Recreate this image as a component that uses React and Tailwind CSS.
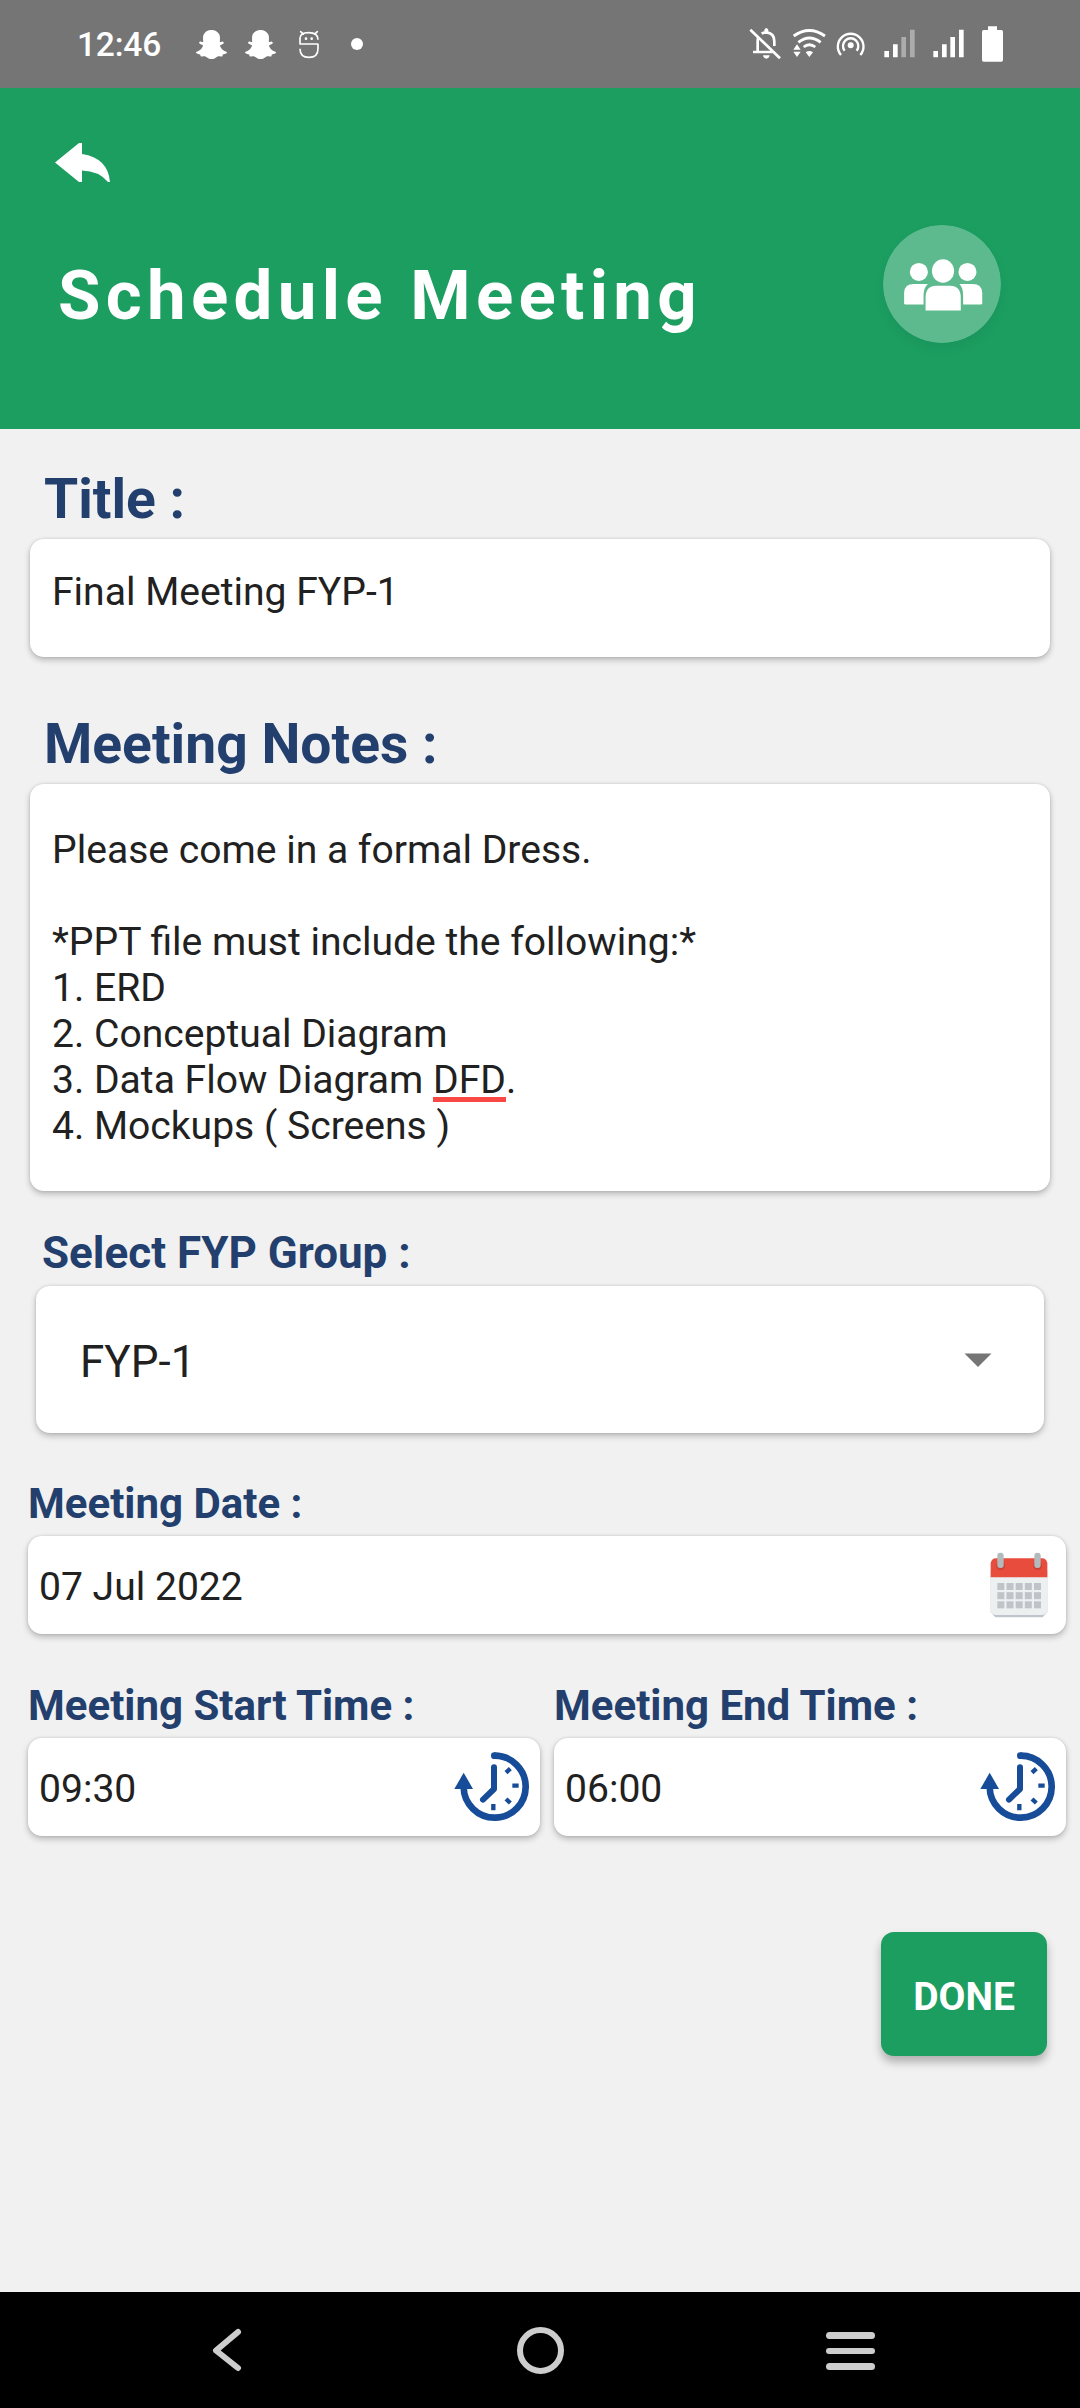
import React from "react";
import { FaSnapchatGhost } from "react-icons/fa";

const CARD =
  "bg-white rounded-[14px] shadow-[0_3px_6px_rgba(0,0,0,0.24),0_0_3px_rgba(0,0,0,0.12)]";
const LABEL = "font-bold text-[#233f6e] whitespace-pre";

function StatusBar() {
  return (
    <div className="flex h-[88px] items-start bg-[#757575] text-white">
      <div className="ml-[77px] mt-[25px] w-[119px] text-[33.500px] font-medium leading-[40px] tracking-[-0.2px]">12:46</div>
      <FaSnapchatGhost className="mt-[29px] size-[31px]" />
      <FaSnapchatGhost className="ml-[18px] mt-[29px] size-[31px]" />
      <svg className="ml-[22px] mt-[30px] h-[29px] w-[22px]" viewBox="714 90 66 87" fill="none" stroke="currentColor" strokeWidth="5">
        <path d="M775 132H720V115Q720 98 746 98Q774 98 774 119M720 146Q720 172 747 172Q774 172 774 146V132" strokeLinejoin="round" />
        <path d="M722 95L730 102M772 95L764 102" strokeLinecap="round" />
        <circle cx="738" cy="116" r="4" fill="currentColor" stroke="none" />
        <circle cx="755" cy="116" r="4" fill="currentColor" stroke="none" />
      </svg>
      <div className="ml-[31px] mt-[38px] size-[12px] rounded-full bg-white" />
      <svg className="ml-auto mr-[76px] mt-[24px] h-[40px] w-[256px]" viewBox="54 72 768 120" fill="none" stroke="currentColor">
        <path d="M61 89L150 175" strokeWidth="8" />
        <path d="M69 156H128M83 156V122Q83 113 86 110M95 101Q101 97 109 97Q133 99 133 124V138" strokeWidth="8" />
        <path d="M103 97V89Q109 79 115 89V97ZM99 166H119Q117 176 109 176Q101 176 99 166Z" fill="currentColor" stroke="none" />
        <path d="M191 108Q238 75 285 108M205 127Q238 101 272 127M221 141Q238 127 256 141" strokeWidth="8.5" />
        <path d="M227 157Q238 149 249 157L238 171ZM201 133L212 149H190ZM190 155H212L201 171Z" fill="currentColor" stroke="none" />
        <path d="M333 165A38.500 38.500 0 1 1 391 165M344 152A23 23 0 1 1 380 152" strokeWidth="7" />
        <circle cx="362" cy="136" r="9" fill="currentColor" stroke="none" />
        <g fill="currentColor" stroke="none">
          <path d="M463 153H477V172H463ZM489 133H503V172H489Z" />
          <path d="M514 111H528V172H514ZM540 89H554V172H540Z" opacity="0.4" />
          <path d="M610 153H624V172H610ZM636 133H650V172H636ZM661 111H675V172H661ZM687 89H701V172H687Z" />
          <path d="M774 79H801V90H814Q819 90 819 95V180Q819 185 814 185H761Q756 185 756 180V95Q756 90 761 90H774Z" />
        </g>
      </svg>
    </div>
  );
}

function Header() {
  return (
    <header className="flex h-[341px] flex-col bg-[#1c9e61] text-white">
      <svg className="ml-[55px] mt-[55px] h-[39px] w-[56px]" viewBox="0 0 56 39" fill="currentColor">
        <path d="M0 19.500L24 0H27V11Q53 15 55 39H53Q44 28 27 27.500V39H24Z" />
      </svg>
      <div className="flex items-start">
        <h1 className="ml-[58px] mt-[74px] text-[69px] font-bold leading-[80px] tracking-[5.3px]">Schedule Meeting</h1>
        <svg className="ml-auto mr-[79px] mt-[43px] size-[118px] rounded-full shadow-[0_6px_12px_rgba(0,0,0,0.06)]" viewBox="72 45 352 352" fill="currentColor">
          <circle cx="248" cy="221" r="176" fill="#5dba8e" />
          <ellipse cx="251" cy="182" rx="33" ry="35" />
          <circle cx="179" cy="185" r="27" />
          <circle cx="324" cy="185" r="27" />
          <path d="M135 280V246Q137 221 163 221H206Q193 232 193 256V282H140Q135 282 135 280ZM368 280V246Q366 221 340 221H300Q311 232 311 256V282H363Q368 282 368 280Z" />
          <path d="M199 300V262Q199 226 231 226H272Q304 226 304 262V300Z" />
        </svg>
      </div>
    </header>
  );
}

function CalendarIcon() {
  const cols = [112, 139.5, 167, 194.5, 222];
  const rows = [127, 154.5, 182];
  return (
    <svg className="h-[66px] w-[58px]" viewBox="90 34 174 198">
      <path d="M92 90H262V214L248 230H106L92 214Z" fill="#bfc6cb" />
      <path d="M92 90H262V212Q257 223 246 223H108Q97 223 92 212Z" fill="#ecf0f1" />
      <path d="M92 110V68Q95 53 108 53H246Q259 53 262 68V110Z" fill="#e74c3c" />
      <circle cx="122" cy="75" r="13" fill="#b83c30" opacity="0.6" />
      <circle cx="233" cy="75" r="13" fill="#b83c30" opacity="0.6" />
      <rect x="112" y="36" width="19" height="46" rx="9" fill="#b3babd" />
      <rect x="223" y="36" width="19" height="46" rx="9" fill="#b3babd" />
      {rows.map((y) => cols.map((x) => <rect key={x + "-" + y} x={x} y={y} width="21" height="21" fill="#bec4c8" />))}
    </svg>
  );
}

function ClockIcon() {
  return (
    <svg className="h-[70px] w-[75px]" viewBox="44 37 225 210" fill="none" stroke="#174c98">
      <path d="M165 48A93 93 0 1 1 73 142" strokeWidth="20" />
      <circle cx="165" cy="48" r="10" fill="#174c98" stroke="none" />
      <path d="M73 99L101 148H45Z" fill="#174c98" stroke="none" />
      <path d="M164 83V148L131 180" strokeWidth="18" strokeLinecap="round" strokeLinejoin="round" />
      <path d="M200 99L213 87M219 138H238M200 178L213 190M162 193V212" strokeWidth="13" />
    </svg>
  );
}

function TimeField({ label, value }) {
  return (
    <div className="w-[512px]">
      <div className={LABEL + " text-[42px] leading-[48px]"}>{label}</div>
      <div className={CARD + " mt-[8px] flex h-[98px] items-center justify-between pl-[11px] pr-[11px]"}>
        <span className="mt-[3px] text-[39.100px] leading-[46px]">{value}</span>
        <ClockIcon />
      </div>
    </div>
  );
}

function NavBar() {
  return (
    <nav className="mt-auto flex h-[116px] items-center bg-black text-[#cdcdcd]">
      <svg className="ml-[211px] h-[48px] w-[32px]" viewBox="0 0 32 48" fill="none" stroke="currentColor" strokeWidth="6" strokeLinecap="round" strokeLinejoin="round">
        <path d="M27 6L5 24.500L27 42" />
      </svg>
      <div className="ml-[274px] size-[47px] rounded-full border-[6px] border-[#cdcdcd]" />
      <div className="ml-[262px] mt-[2px] flex w-[49px] flex-col gap-[9px]">
        <div className="h-[6.500px] rounded-full bg-[#cdcdcd]" />
        <div className="h-[6.500px] rounded-full bg-[#cdcdcd]" />
        <div className="h-[6.500px] rounded-full bg-[#cdcdcd]" />
      </div>
    </nav>
  );
}

export default function App() {
  return (
    <div className="flex h-[2408px] w-[1080px] flex-col overflow-hidden bg-[#f1f1f1] font-[Roboto,sans-serif] text-[#212121]">
      <StatusBar />
      <Header />

      <section className="mx-[30px] pt-[40px]">
        <div className={LABEL + " pl-[14px] text-[55.200px] leading-[60px]"}>Title :</div>
        <div className={CARD + " mt-[10px] h-[118px] pl-[22px] pt-[30px] text-[39.100px] leading-[46px]"}>Final Meeting FYP-1</div>
      </section>

      <section className="mx-[30px] pt-[57px]">
        <div className={LABEL + " pl-[14px] text-[55.200px] leading-[60px]"}>Meeting Notes :</div>
        <div className={CARD + " mt-[10px] flex h-[407px] flex-col whitespace-pre pl-[22px] pt-[43px] text-[39.100px] leading-[46px]"}>
          <p>Please come in a formal Dress.</p>
          <p className="mt-[46px]">*PPT file must include the following:*</p>
          <p>1. ERD</p>
          <p>2. Conceptual Diagram</p>
          <div className="flex">
            <span>{"3. Data Flow Diagram "}</span>
            <span className="h-[44.500px] border-b-[5.500px] border-[#fa4844]">DFD</span>
            <span>.</span>
          </div>
          <p>4. Mockups ( Screens )</p>
        </div>
      </section>

      <section className="mx-[36px] pt-[36px]">
        <div className={LABEL + " pl-[6px] text-[44px] leading-[52px]"}>Select FYP Group :</div>
        <div className={CARD + " mt-[7px] flex h-[147px] items-center justify-between pl-[44px] pr-[52px] text-[44px] leading-[52px]"}>
          <span className="mt-[5px]">FYP-1</span>
          <svg className="h-[14px] w-[28px]" viewBox="0 0 28 14" fill="#757575">
            <path d="M0.500 0.500H27.500L14 14Z" />
          </svg>
        </div>
      </section>

      <section className="ml-[28px] mr-[14px] pt-[47px]">
        <div className={LABEL + " text-[42px] leading-[48px]"}>Meeting Date :</div>
        <div className={CARD + " mt-[8px] flex h-[98px] items-center justify-between pl-[11px] pr-[18px]"}>
          <span className="mt-[3px] text-[39.100px] leading-[46px]">07 Jul 2022</span>
          <CalendarIcon />
        </div>
      </section>

      <section className="ml-[28px] mr-[14px] flex justify-between pt-[48px]">
        <TimeField label="Meeting Start Time :" value="09:30" />
        <TimeField label="Meeting End Time :" value="06:00" />
      </section>

      <button className="ml-auto mr-[33px] mt-[96px] h-[124px] w-[166px] rounded-[13px] bg-[#1c9e61] pt-[5px] text-[39px] font-bold leading-[46px] text-white shadow-[0_6px_10px_rgba(0,0,0,0.28)]">
        DONE
      </button>

      <NavBar />
    </div>
  );
}
